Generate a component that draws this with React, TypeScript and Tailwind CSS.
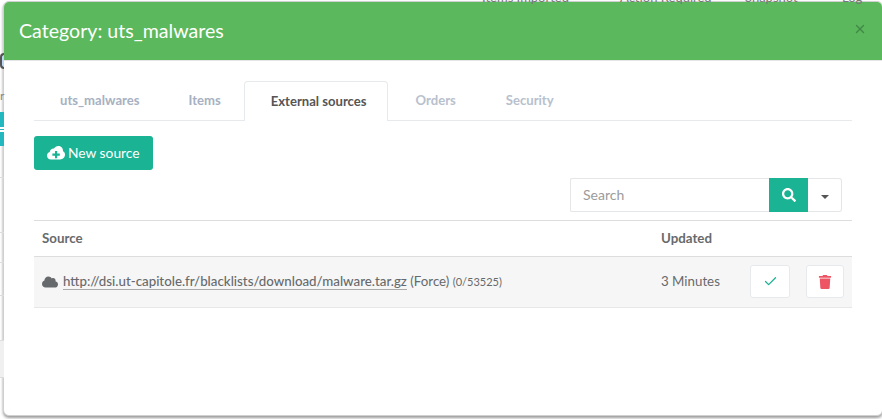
import { X, Check } from "lucide-react";
import { FaSearch, FaCloud, FaTrash } from "react-icons/fa";

const font = "font-['Lato','Carlito',sans-serif]";

function CloudPlus() {
  return (
    <svg width="18" height="14" viewBox="0 0 18 14" className="shrink-0">
      <path d="M4 13.500C1.800 13.500 0 11.800 0 9.700 0 8 1.100 6.600 2.700 6.100 2.900 3.900 4.800 2.200 7 2.400 8 .9 9.500 0 11.200 0c2.700 0 4.800 2.100 4.800 4.700v.6c1.200.6 2 1.900 2 3.300 0 2.700-2.100 4.900-4.800 4.900H4Z" fill="#fff" />
      <path d="M8 5h2.200v2.600h2.600v2.100h-2.600v2.500H8V9.700H5.400V7.600H8V5Z" fill="#1ab394" />
    </svg>
  );
}

export default function App() {
  return (
    <div className={`relative h-[419px] w-[882px] overflow-hidden bg-white ${font} text-[13.300px] text-[#676a6c]`}>
      {/* blurred page behind the dialog */}
      <div className="absolute left-[462px] top-[-9px] flex whitespace-nowrap text-[13px] leading-[12px] text-[#777]">
        <span className="ml-[20px] w-[118px]">Items Imported</span>
        <span className="ml-[20px] w-[125px]">Action Required</span>
        <span className="w-[97px]">Snapshot</span>
        <span>Log</span>
      </div>
      <div className="absolute left-0 top-[53px] h-[16px] w-[4px] rounded-l-full border-2 border-r-0 border-[#555] bg-[#bcd8f5]" />
      <div className="absolute left-0 top-[90px] text-[12px] leading-none text-[#888]">r</div>
      <div className="absolute left-0 top-[112px] flex h-[34px] w-[4px] flex-col justify-center gap-[1px] bg-[#23b7c0]">
        <span className="h-[2px] bg-white" />
        <span className="h-[2px] bg-white" />
      </div>
      <div className="absolute left-0 top-[177px] h-px w-[4px] bg-[#ddd]" />
      <div className="absolute left-0 top-[232px] h-px w-[4px] bg-[#ddd]" />
      <div className="absolute left-0 top-[262px] h-px w-[4px] bg-[#ddd]" />
      <div className="absolute left-0 top-[295px] h-px w-[4px] bg-[#ddd]" />
      <div className="absolute left-0 top-[340px] h-[38px] w-[4px] border-y border-[#ddd] bg-[#f0f0f0]" />

      {/* dialog */}
      <div className="ml-[3px] mt-[1px] flex h-[415px] w-[880px] flex-col overflow-hidden rounded-[6px] border border-[#d0d0d0] bg-white shadow-[0_2px_3px_rgba(0,0,0,0.4)]">
        <header className="flex h-[59px] shrink-0 items-center justify-between border-b border-[#e5e5e5] bg-[#5cb85c] pl-[15px] pr-[15px]">
          <h1 className="text-[19.600px] font-normal leading-none text-white">Category: uts_malwares</h1>
          <X size={14} strokeWidth={2.500} className="mb-[5px] text-[#3f8a46]" />
        </header>

        <div className="flex flex-col px-[30px] pt-[20px]">
          <nav className="flex h-[40px] w-[818px] items-stretch border-b border-[#e7eaec] text-[13.100px] font-bold leading-none text-[#a7b1c2]">
            <span className="flex items-center pl-[26px] pr-[25px] pt-px">uts_malwares</span>
            <span className="flex items-center pl-[24px] pr-[23px] pt-px">Items</span>
            <span className="-mb-px flex items-center rounded-t-[4px] border border-b-0 border-[#e7eaec] bg-white pl-[26px] pr-[20px] text-[#555]">External sources</span>
            <span className="flex items-center pl-[28px] pr-[24px] pt-px opacity-80">Orders</span>
            <span className="flex items-center pl-[26px] pt-px opacity-80">Security</span>
          </nav>

          <div className="mt-[15px] flex">
            <button className="flex h-[34px] w-[119px] items-center gap-[3px] rounded-[3px] bg-[#1ab394] pl-[13px] text-[13.800px] text-white">
              <CloudPlus />
              New source
            </button>
          </div>

          <div className="mt-[8px] flex justify-end pr-[10px]">
            <div className="flex h-[34px] w-[272px] items-stretch">
              <div className="flex flex-1 items-center rounded-l-[2px] border border-r-0 border-[#e5e6e7] pb-[2px] pl-[12px] text-[14px] text-[#9b9b9b]">Search</div>
              <div className="flex w-[39px] items-center justify-center bg-[#1ab394]">
                <FaSearch size={14} className="text-white" />
              </div>
              <div className="flex w-[34px] items-center justify-center rounded-r-[3px] border border-l-0 border-[#e5e6e7]">
                <span className="mt-[3px] h-0 w-0 border-x-[4px] border-t-[4px] border-x-transparent border-t-[#555]" />
              </div>
            </div>
          </div>

          <table className="mt-[8px] w-[818px] border-collapse text-left">
            <thead>
              <tr className="h-[36px] border-y border-[#ddd]">
                <th className="pl-[8px] font-bold">Source</th>
                <th className="w-[191px] font-bold">Updated</th>
              </tr>
            </thead>
            <tbody>
              <tr className="h-[51px] border-b border-[#e7e7e7] bg-[#f6f6f6]">
                <td className="pl-[8px]">
                  <div className="flex items-center gap-[5px]">
                    <FaCloud size={16} className="shrink-0" />
                    <span className="mb-[1px] whitespace-nowrap">
                      <a className="border-b border-[#aaa] font-medium">http://dsi.ut-capitole.fr/blacklists/download/malware.tar.gz</a>
                      <span> (Force) </span>
                      <span className="text-[11px]">(0/53525)</span>
                    </span>
                  </div>
                </td>
                <td>
                  <div className="flex items-center">
                    <span className="mb-[1px] w-[89px]">3 Minutes</span>
                    <span className="mb-[1px] flex h-[33px] w-[40px] items-center justify-center rounded-[3px] border border-[#e7eaec] bg-white">
                      <Check size={15} strokeWidth={2} className="text-[#1ab394]" />
                    </span>
                    <span className="mb-[1px] ml-[16px] flex h-[33px] w-[38px] items-center justify-center rounded-[3px] border border-[#e7eaec] bg-white">
                      <FaTrash size={14} className="text-[#ed5565]" />
                    </span>
                  </div>
                </td>
              </tr>
            </tbody>
          </table>
        </div>
      </div>
    </div>
  );
}
